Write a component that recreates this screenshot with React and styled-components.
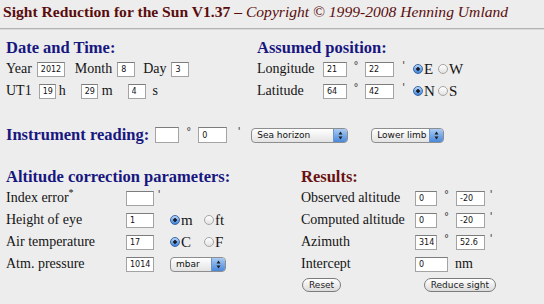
import React from "react";
import styled, { createGlobalStyle } from "styled-components";

const GlobalStyle = createGlobalStyle`
  html, body {
    margin: 0;
    padding: 0;
    background: #ededed;
  }
  body {
    font-family: "Liberation Serif", "Times New Roman", serif;
    font-size: 14px;
    color: #141414;
  }
`;

const Page = styled.div`
  width: 544px;
  height: 304px;
  overflow: hidden;
  background: #ededed;
`;

const Title = styled.h1`
  margin: 0;
  height: 28px;
  box-sizing: border-box;
  padding: 2px 0 0 3px;
  line-height: 20px;
  font-size: 15.6px;
  font-weight: bold;
  color: #5a0c0c;
  white-space: nowrap;
  em {
    font-weight: normal;
  }
`;

const Rule = styled.div`
  border-top: 1px solid #b3b3b3;
  border-bottom: 1px solid #dadada;
`;

const Columns = styled.div`
  display: grid;
  grid-template-columns: ${(p) => p.$left}px 1fr;
  padding-left: 6px;
  margin-top: ${(p) => p.$top}px;
`;

const Heading = styled.h2`
  margin: 0 ${(p) => p.$r ?? 0}px 0 0;
  height: 20px;
  line-height: 20px;
  font-size: 16.5px;
  font-weight: bold;
  color: ${(p) => (p.$red ? "#6a1212" : "#17177f")};
  white-space: nowrap;
  flex: none;
`;

const Row = styled.div`
  display: flex;
  align-items: center;
  height: 22px;
  white-space: nowrap;
`;

const Label = styled.span`
  width: ${(p) => p.$w}px;
  flex: none;
  sup {
    font-size: 10px;
    line-height: 0;
  }
`;

const Word = styled.span`
  margin: 0 ${(p) => p.$r ?? 5}px 0 ${(p) => p.$l ?? 5}px;
`;

const Field = styled.input`
  width: ${(p) => p.$w}px;
  height: ${(p) => p.$h ?? 15}px;
  box-sizing: border-box;
  margin: 0;
  padding: 0 2px 0 3px;
  border: 1px solid #a3a3a3;
  border-top-color: #7c7c7c;
  background: #fff;
  font: 8px "DejaVu Sans", sans-serif;
  color: #111;
  flex: none;
`;

const Mark = styled.span`
  width: ${(p) => p.$w}px;
  flex: none;
  align-self: flex-start;
  padding-top: 3px;
  text-align: center;
  font: 10px "DejaVu Sans", sans-serif;
  line-height: 10px;
  color: #333;
`;

const Options = styled.div`
  display: flex;
  align-items: center;
  margin-left: ${(p) => p.$l}px;
`;

const Choice = styled.label`
  display: flex;
  align-items: center;
  width: ${(p) => p.$w}px;
  gap: 1px;
  font-size: 15px;
`;

const Radio = styled.span`
  width: 10px;
  height: 10px;
  box-sizing: border-box;
  border-radius: 50%;
  border: 1px solid ${(p) => (p.$on ? "#3a67a6" : "#a5a5a5")};
  background: ${(p) =>
    p.$on
      ? "radial-gradient(circle, #1b1b2a 0 1.5px, transparent 2px), linear-gradient(#b5d6f8, #3d82d9)"
      : "linear-gradient(#ffffff, #e2e2e2)"};
  flex: none;
`;

const SelectBox = styled.div`
  display: flex;
  align-items: center;
  width: ${(p) => p.$w}px;
  height: 15px;
  box-sizing: border-box;
  margin-left: ${(p) => p.$l ?? 0}px;
  padding-left: 5px;
  border: 1px solid #8e8e8e;
  border-radius: 4px;
  overflow: hidden;
  background: linear-gradient(#ffffff, #e3e3e3);
  font: 9px "DejaVu Sans", sans-serif;
  color: #111;
  flex: none;
`;

const Stepper = styled.span`
  margin-left: auto;
  width: 13px;
  height: 100%;
  display: flex;
  align-items: center;
  justify-content: center;
  border-left: 1px solid #6c95cc;
  background: linear-gradient(#a8cbf4, #4a88db);
`;

const Select = ({ w, l, children }) => (
  <SelectBox $w={w} $l={l}>
    {children}
    <Stepper>
      <svg width="5" height="9" viewBox="0 0 5 9">
        <path d="M2.5 0.5 L4.5 3.5 H0.5 Z M2.5 8.5 L4.5 5.5 H0.5 Z" fill="#1d1d1d" />
      </svg>
    </Stepper>
  </SelectBox>
);

const InstrumentRow = styled(Row)`
  padding-left: 6px;
  margin-top: 22px;
`;

const ButtonRow = styled.div`
  display: flex;
  align-items: center;
  justify-content: space-between;
  width: 194px;
  height: 20px;
  padding-left: 1px;
`;

const Button = styled.button`
  height: 14px;
  margin: 0;
  padding: 0 6px;
  border: 1px solid #7b7b7b;
  border-radius: 7px;
  background: linear-gradient(#ffffff, #dcdcdc);
  font: 9px "DejaVu Sans", sans-serif;
  line-height: 12px;
  color: #222;
`;

const Deg = ({ w = 19 }) => <Mark $w={w}>°</Mark>;
const Min = ({ w = 10 }) => <Mark $w={w}>'</Mark>;

export default function App() {
  return (
    <Page>
      <GlobalStyle />
      <Title>
        Sight Reduction for the Sun V1.37 – <em>Copyright © 1999-2008 Henning Umland</em>
      </Title>
      <Rule />

      <Columns $left={251} $top={8}>
        <div>
          <Heading>Date and Time:</Heading>
          <Row>
            <span>Year</span>
            <Field $w={28} defaultValue="2012" style={{ marginLeft: 5 }} />
            <Word $l={10}>Month</Word>
            <Field $w={18} defaultValue="8" />
            <Word $l={8}>Day</Word>
            <Field $w={18} defaultValue="3" />
          </Row>
          <Row>
            <span>UT1</span>
            <Field $w={17} defaultValue="19" style={{ marginLeft: 7 }} />
            <Word $l={3} $r={15}>h</Word>
            <Field $w={17} defaultValue="29" />
            <Word $l={4} $r={15}>m</Word>
            <Field $w={18} defaultValue="4" />
            <Word $l={7}>s</Word>
          </Row>
        </div>
        <div>
          <Heading>Assumed position:</Heading>
          <Row>
            <Label $w={66}>Longitude</Label>
            <Field $w={24} defaultValue="21" />
            <Deg w={18} />
            <Field $w={29} defaultValue="22" />
            <Min w={19} />
            <Options $l={0}>
              <Choice $w={25}>
                <Radio $on />E
              </Choice>
              <Choice $w={25}>
                <Radio />W
              </Choice>
            </Options>
          </Row>
          <Row>
            <Label $w={66}>Latitude</Label>
            <Field $w={24} defaultValue="64" />
            <Deg w={18} />
            <Field $w={29} defaultValue="42" />
            <Min w={19} />
            <Options $l={0}>
              <Choice $w={25}>
                <Radio $on />N
              </Choice>
              <Choice $w={25}>
                <Radio />S
              </Choice>
            </Options>
          </Row>
        </div>
      </Columns>

      <InstrumentRow>
        <Heading as="span" $r={6}>
          Instrument reading:
        </Heading>
        <Field $w={24} $h={16} defaultValue="" />
        <Deg w={19} />
        <Field $w={29} $h={16} defaultValue="0" />
        <Min w={24} />
        <Select w={97}>Sea horizon</Select>
        <Select w={73} l={23}>
          Lower limb
        </Select>
      </InstrumentRow>

      <Columns $left={295} $top={21}>
        <div>
          <Heading>Altitude correction parameters:</Heading>
          <Row>
            <Label $w={120}>
              Index error<sup>*</sup>
            </Label>
            <Field $w={28} defaultValue="" />
            <Min w={10} />
          </Row>
          <Row>
            <Label $w={120}>Height of eye</Label>
            <Field $w={28} defaultValue="1" />
            <Options $l={16}>
              <Choice $w={34}>
                <Radio $on />m
              </Choice>
              <Choice $w={30}>
                <Radio />ft
              </Choice>
            </Options>
          </Row>
          <Row>
            <Label $w={120}>Air temperature</Label>
            <Field $w={28} defaultValue="17" />
            <Options $l={16}>
              <Choice $w={34}>
                <Radio $on />C
              </Choice>
              <Choice $w={30}>
                <Radio />F
              </Choice>
            </Options>
          </Row>
          <Row>
            <Label $w={120}>Atm. pressure</Label>
            <Field $w={28} defaultValue="1014" />
            <Select w={56} l={16}>
              mbar
            </Select>
          </Row>
        </div>
        <div>
          <Heading $red>Results:</Heading>
          <Row>
            <Label $w={114}>Observed altitude</Label>
            <Field $w={22} defaultValue="0" />
            <Deg w={19} />
            <Field $w={29} defaultValue="-20" />
            <Min w={12} />
          </Row>
          <Row>
            <Label $w={114}>Computed altitude</Label>
            <Field $w={22} defaultValue="0" />
            <Deg w={19} />
            <Field $w={29} defaultValue="-20" />
            <Min w={12} />
          </Row>
          <Row>
            <Label $w={114}>Azimuth</Label>
            <Field $w={22} defaultValue="314" />
            <Deg w={19} />
            <Field $w={29} defaultValue="52.6" />
            <Min w={12} />
          </Row>
          <Row>
            <Label $w={114}>Intercept</Label>
            <Field $w={33} defaultValue="0" />
            <Word $l={7}>nm</Word>
          </Row>
          <ButtonRow>
            <Button>Reset</Button>
            <Button>Reduce sight</Button>
          </ButtonRow>
        </div>
      </Columns>
    </Page>
  );
}
